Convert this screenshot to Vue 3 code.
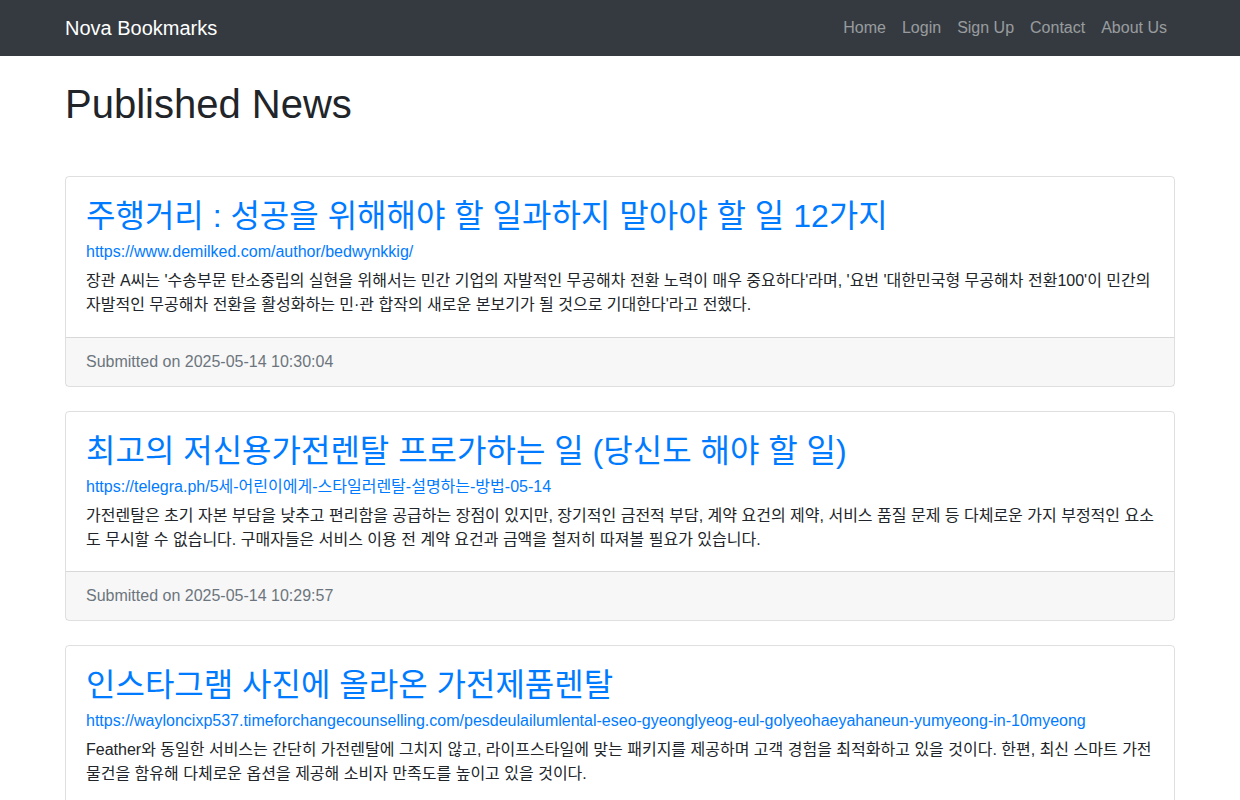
<template>
  <div class="page">
    <nav class="navbar">
      <div class="container nav-inner">
        <a class="brand" href="#">Nova Bookmarks</a>
        <ul class="nav-links">
          <li v-for="link in links" :key="link"><a href="#">{{ link }}</a></li>
        </ul>
      </div>
    </nav>
    <main class="container">
      <h1>Published News</h1>
      <div v-for="item in news" :key="item.url" class="card">
        <div class="card-body">
          <h3><a href="#">{{ item.title }}</a></h3>
          <a class="url" href="#">{{ item.url }}</a>
          <p>{{ item.text }}</p>
        </div>
        <div class="card-footer">Submitted on {{ item.date }}</div>
      </div>
    </main>
  </div>
</template>

<script setup>
const links = ['Home', 'Login', 'Sign Up', 'Contact', 'About Us']

const news = [
  {
    title: '주행거리 : 성공을 위해해야 할 일과하지 말아야 할 일 12가지',
    url: 'https://www.demilked.com/author/bedwynkkig/',
    text: "장관 A씨는 '수송부문 탄소중립의 실현을 위해서는 민간 기업의 자발적인 무공해차 전환 노력이 매우 중요하다'라며, '요번 '대한민국형 무공해차 전환100'이 민간의 자발적인 무공해차 전환을 활성화하는 민·관 합작의 새로운 본보기가 될 것으로 기대한다'라고 전했다.",
    date: '2025-05-14 10:30:04'
  },
  {
    title: '최고의 저신용가전렌탈 프로가하는 일 (당신도 해야 할 일)',
    url: 'https://telegra.ph/5세-어린이에게-스타일러렌탈-설명하는-방법-05-14',
    text: '가전렌탈은 초기 자본 부담을 낮추고 편리함을 공급하는 장점이 있지만, 장기적인 금전적 부담, 계약 요건의 제약, 서비스 품질 문제 등 다체로운 가지 부정적인 요소도 무시할 수 없습니다. 구매자들은 서비스 이용 전 계약 요건과 금액을 철저히 따져볼 필요가 있습니다.',
    date: '2025-05-14 10:29:57'
  },
  {
    title: '인스타그램 사진에 올라온 가전제품렌탈',
    url: 'https://wayloncixp537.timeforchangecounselling.com/pesdeulailumlental-eseo-gyeonglyeog-eul-golyeohaeyahaneun-yumyeong-in-10myeong',
    text: 'Feather와 동일한 서비스는 간단히 가전렌탈에 그치지 않고, 라이프스타일에 맞는 패키지를 제공하며 고객 경험을 최적화하고 있을 것이다. 한편, 최신 스마트 가전 물건을 함유해 다체로운 옵션을 제공해 소비자 만족도를 높이고 있을 것이다.',
    date: '2025-05-14 10:29:50'
  }
]
</script>

<style>
html, body { margin: 0; background: #fff; }
</style>

<style scoped>
.page {
  font-family: "Liberation Sans", "Noto Sans CJK JP", sans-serif;
  font-size: 16px;
  line-height: 1.5;
  color: #212529;
}
a { text-decoration: none; color: #007bff; }

.container { width: 1140px; margin: 0 auto; padding: 0 15px; box-sizing: border-box; }

.navbar { background: #343a40; padding: 8px 0; }
.nav-inner { display: flex; align-items: center; justify-content: space-between; }
.brand { color: #fff; font-size: 20px; line-height: 30px; padding: 5px 0; }
.nav-links { display: flex; list-style: none; margin: 0; padding: 0; }
.nav-links a { display: block; padding: 8px; color: rgba(255,255,255,.5); }

h1 { font-size: 40px; line-height: 1.2; margin: 24px 0 48.45px; font-weight: 400; }

.card { border: 1px solid rgba(0,0,0,.125); border-radius: 4px; margin-bottom: 24px; }
.card-body { padding: 20px 20px 19.4px; }
h3 { font-size: 32px; font-weight: 400; line-height: 38px; height: 38px; margin: 0 0 5px; }
.url { display: block; height: 24px; line-height: 24px; margin-bottom: 5px; }
p { margin: 0; line-height: 24px; }
.card-footer {
  padding: 12px 20px;
  background: rgba(0,0,0,.03);
  border-top: 1px solid rgba(0,0,0,.125);
  color: #6c757d;
}
</style>
